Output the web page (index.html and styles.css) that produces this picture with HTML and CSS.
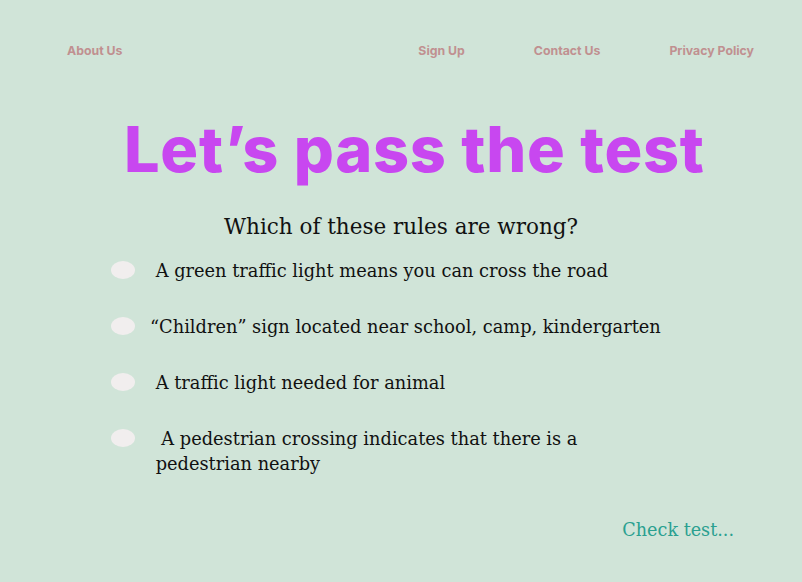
FILE: index.html
```html
<!DOCTYPE html>
<html lang="en">
<head>
<meta charset="utf-8">
<title>Let's pass the test</title>
<link rel="stylesheet" href="styles.css">
</head>
<body>
<nav class="nav">
  <a class="nav-link" href="#">About Us</a>
  <div class="nav-right">
    <a class="nav-link" href="#">Sign Up</a>
    <a class="nav-link" href="#">Contact Us</a>
    <a class="nav-link" href="#">Privacy Policy</a>
  </div>
</nav>
<main class="main">
  <h1 class="title">Let’s pass the test</h1>
  <h2 class="question">Which of these rules are wrong?</h2>
  <ul class="options">
    <li class="option"><span class="radio"></span><span class="label">&nbsp;A green traffic light means you can cross the road</span></li>
    <li class="option"><span class="radio"></span><span class="label">“Children” sign located near school, camp, kindergarten</span></li>
    <li class="option"><span class="radio"></span><span class="label">&nbsp;A traffic light needed for animal</span></li>
    <li class="option"><span class="radio"></span><span class="label">&nbsp;&nbsp;A pedestrian crossing indicates that there is a<br>&nbsp;pedestrian nearby</span></li>
  </ul>
  <div class="footer"><a class="check" href="#">Check test...</a></div>
</main>
</body>
</html>
```
FILE: styles.css
```css
html, body {
  margin: 0;
  padding: 0;
}
body {
  background: #d0e4d8;
  width: 802px;
  height: 582px;
  overflow: hidden;
}
.nav {
  display: flex;
  align-items: center;
  padding: 43px 48px 0 67px;
  height: 16px;
}
.nav-right {
  margin-left: auto;
  display: flex;
  gap: 69px;
}
.nav-link {
  font-family: Inter, "Liberation Sans", sans-serif;
  font-weight: 700;
  font-size: 12.3px;
  color: #c09090;
  text-decoration: none;
  line-height: 16px;
}
.main {
  display: flex;
  flex-direction: column;
}
.title {
  margin: 52px 0 0 0;
  padding-left: 124px;
  font-family: Inter, "Liberation Sans", sans-serif;
  font-weight: 800;
  font-size: 63px;
  letter-spacing: 0.75px;
  line-height: 76px;
  color: #c847f0;
}
.question {
  margin: 26px 0 0 0;
  text-align: center;
  font-family: "DejaVu Serif", serif;
  font-weight: 400;
  font-size: 21.5px;
  line-height: 28px;
  color: #111;
}
.options {
  list-style: none;
  margin: 17px 0 0 111px;
  padding: 0;
  display: flex;
  flex-direction: column;
  gap: 31px;
}
.option {
  display: flex;
  align-items: flex-start;
  gap: 15px;
}
.radio {
  flex: none;
  width: 24px;
  height: 18px;
  border-radius: 50%;
  background: #f1eeee;
  margin-top: 3px;
}
.label {
  font-family: "DejaVu Serif", serif;
  font-size: 17.8px;
  line-height: 25px;
  color: #111;
}
.footer {
  display: flex;
  justify-content: flex-end;
  padding: 42px 68px 0 0;
}
.check {
  font-family: "DejaVu Serif", serif;
  font-size: 17.6px;
  line-height: 25px;
  color: #2aa090;
  text-decoration: none;
}
```
